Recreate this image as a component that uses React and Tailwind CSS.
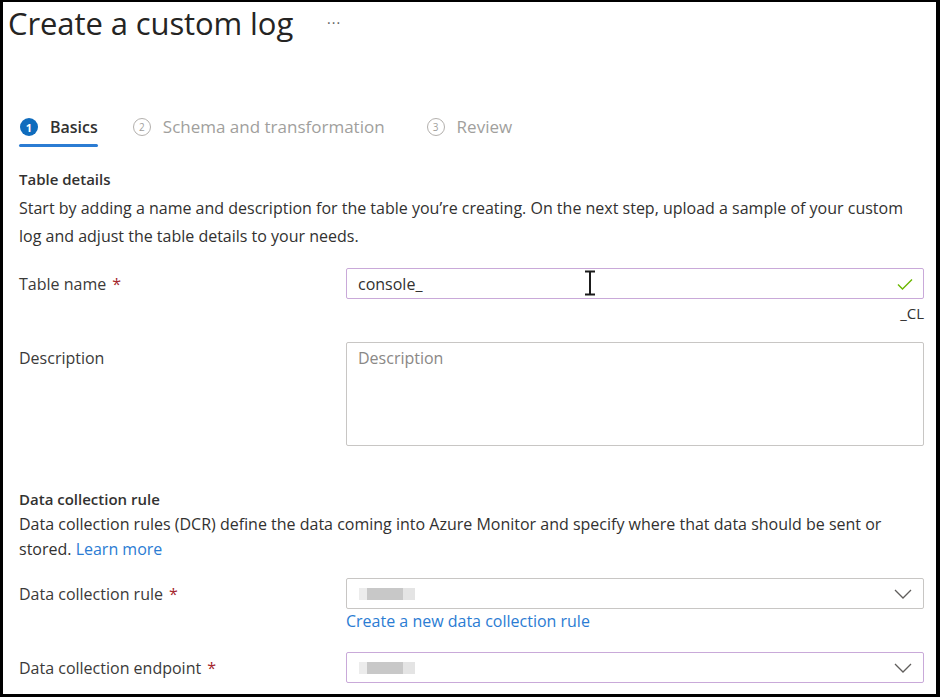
import { useState } from 'react'

const FONT = { fontFamily: '"Open Sans", "Noto Sans", sans-serif' }

function Step({ n, label, active }) {
  return (
    <div className="relative flex h-[38px] items-center gap-[12px]">
      {active ? (
        <span className="flex h-[18px] w-[18px] items-center justify-center rounded-full bg-[#0f6cbd] text-[11px] font-bold leading-none text-white">
          {n}
        </span>
      ) : (
        <span className="flex h-[18px] w-[18px] items-center justify-center rounded-full border border-[#b3b0ad] text-[10px] leading-none text-[#a19f9d]">
          {n}
        </span>
      )}
      <span
        className={
          active
            ? 'text-[16px] font-semibold text-[#323130]'
            : 'text-[17px] text-[#a19f9d]'
        }
      >
        {label}
      </span>
      {active && (
        <span className="absolute -bottom-[1px] left-[-1px] right-0 h-[3px] rounded-full bg-[#2b7cd3]" />
      )}
    </div>
  )
}

function Label({ children, required }) {
  return (
    <div className="w-[327px] shrink-0 text-[16px] text-[#3b3a39]">
      {children}
      {required && <span className="ml-[6px] text-[#a4262c]">*</span>}
    </div>
  )
}

function Chevron() {
  return (
    <svg width="18" height="10" viewBox="0 0 18 10" fill="none">
      <path d="M1 1l8 8 8-8" stroke="#605e5c" strokeWidth="1.3" />
    </svg>
  )
}

function Blur() {
  return (
    <span className="flex h-[12px] items-center">
      <span className="h-[12px] w-[8px] bg-[#ececec]" />
      <span className="h-[12px] w-[36px] bg-[#c8c8c8]" />
      <span className="h-[12px] w-[12px] bg-[#e4e4e4]" />
    </span>
  )
}

export default function App() {
  const [name, setName] = useState('console_')

  return (
    <div className="h-[697px] w-[940px] bg-black pb-[3px] pl-[3px] pr-[4px] pt-[2px]" style={FONT}>
      <div className="h-full overflow-hidden bg-white">
        {/* Header */}
        <div className="flex h-[42px] items-center pl-[5px]">
          <h1 className="text-[31px] leading-[42px] tracking-[-0.1px] text-[#252423]">Create a custom log</h1>
          <span className="ml-[34px] text-[14px] leading-[20px] tracking-[1px] text-[#605e5c]">···</span>
        </div>

        {/* Stepper */}
        <div className="mt-[64px] flex items-center pl-[17px]">
          <Step n="1" label="Basics" active />
          <div className="ml-[35px]">
            <Step n="2" label="Schema and transformation" />
          </div>
          <div className="ml-[42px]">
            <Step n="3" label="Review" />
          </div>
        </div>

        {/* Table details */}
        <div className="mt-[21px] pl-[16px] pr-[12px]">
          <h2 className="text-[15px] font-semibold leading-[24px] text-[#323130]">Table details</h2>
          <p className="mt-[3px] text-[16px] leading-[28px] text-[#323130]">
            Start by adding a name and description for the table you’re creating. On the next step, upload a sample of your custom log and adjust the table details to your needs.
          </p>

          <div className="mt-[18px] flex items-center">
            <Label required>Table name</Label>
            <div className="relative flex h-[31px] flex-1 items-center rounded-[2px] border border-[#c9a9d9] pl-[11px] pr-[10px]">
              <input
                value={name}
                onChange={(e) => setName(e.target.value)}
                className="flex-1 bg-transparent text-[16px] text-[#323130] outline-none"
              />
              <svg width="16" height="12" viewBox="0 0 16 12" fill="none">
                <path d="M1 6.5l4.5 4.5L15 1.5" stroke="#6bb700" strokeWidth="1.4" />
              </svg>
              {/* mouse cursor */}
              <svg className="absolute left-[237px] top-[1px]" width="12" height="26" viewBox="0 0 12 26" fill="none">
                <path d="M1 1.5h10M6 1.5v23M1 24.5h10" stroke="#1b1b1b" strokeWidth="2" />
              </svg>
            </div>
          </div>
          <div className="mt-[3px] text-right text-[15px] leading-[22px] text-[#323130]">_CL</div>

          <div className="mt-[18px] flex items-start">
            <div className="pt-[4px]">
              <Label>Description</Label>
            </div>
            <textarea
              placeholder="Description"
              className="h-[104px] flex-1 resize-none rounded-[2px] border border-[#c8c6c4] px-[11px] py-[3px] text-[16px] text-[#323130] outline-none placeholder:text-[#8a8886]"
            />
          </div>

          {/* Data collection rule */}
          <h2 className="mt-[41px] text-[15px] font-semibold leading-[24px] text-[#323130]">Data collection rule</h2>
          <p className="mt-[1px] text-[16px] leading-[25px] text-[#323130]">
            Data collection rules (DCR) define the data coming into Azure Monitor and specify where that data should be sent or stored. <a href="#" className="text-[#2b7cd3]">Learn more</a>
          </p>

          <div className="mt-[16px] flex items-center">
            <Label required>Data collection rule</Label>
            <div className="flex h-[31px] flex-1 items-center justify-between rounded-[2px] border border-[#c8c6c4] pl-[12px] pr-[11px]">
              <Blur />
              <Chevron />
            </div>
          </div>
          <div className="flex">
            <div className="w-[327px] shrink-0" />
            <a href="#" className="text-[16px] leading-[24px] text-[#2b7cd3]">Create a new data collection rule</a>
          </div>

          <div className="mt-[19px] flex items-center">
            <Label required>Data collection endpoint</Label>
            <div className="flex h-[31px] flex-1 items-center justify-between rounded-[2px] border border-[#c9a9d9] pl-[12px] pr-[11px]">
              <Blur />
              <Chevron />
            </div>
          </div>
        </div>
      </div>
    </div>
  )
}
